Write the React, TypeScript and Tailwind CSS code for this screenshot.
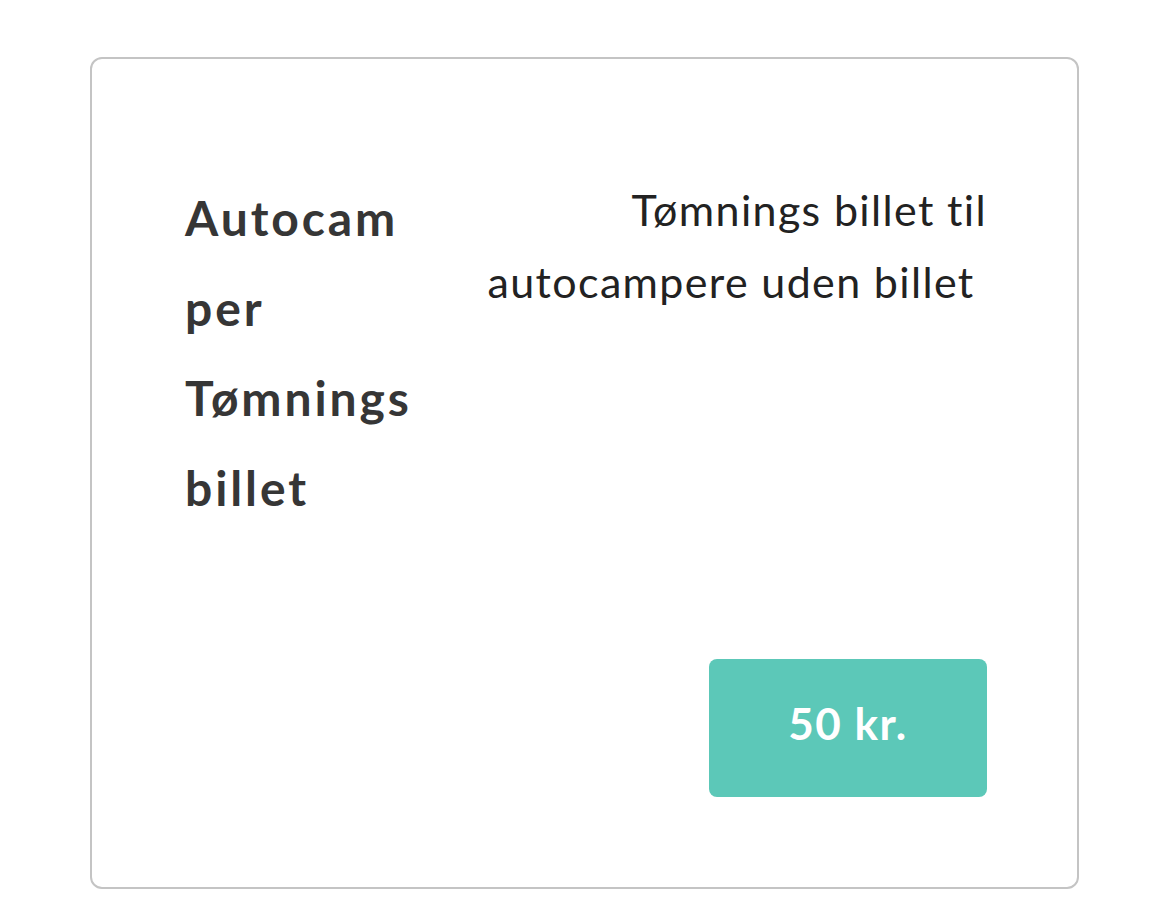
const App = () => {
  return (
    <div className="min-h-[910px] w-full bg-white px-[90px] pt-[57px] font-['Lato',sans-serif]">
      <div className="flex h-[832px] w-[989px] flex-col justify-between rounded-xl border-2 border-[#c4c4c4] pt-[114px] pr-[90px] pb-[90px] pl-[93px]">
        <div className="flex items-start justify-between">
          <h1 className="w-[260px] text-[48px] leading-[90px] font-bold tracking-[2.9px] text-[#363636]">
            Autocam per Tømnings billet
          </h1>
          <p className="mt-[1px] w-[520px] text-right text-[43px] leading-[72px] tracking-[1.35px] text-[#222222]">
            Tømnings billet til autocampere uden billet{"\u00a0"}
          </p>
        </div>
        <div className="flex justify-end">
          <button className="flex h-[138px] w-[278px] items-center justify-center rounded-lg bg-[#5cc8b8] pb-[10px] text-[44px] font-bold tracking-[1.5px] text-white">
            50 kr.
          </button>
        </div>
      </div>
    </div>
  )
}

export default App
